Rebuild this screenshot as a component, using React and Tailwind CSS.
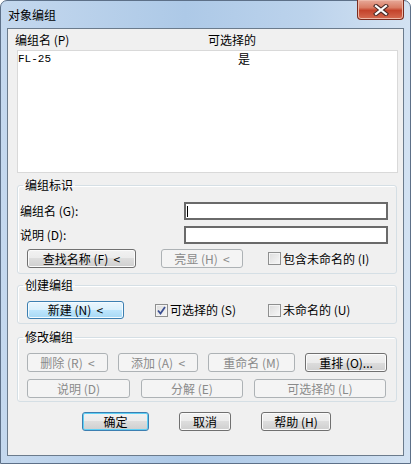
import React from 'react';

const btnStyles = {
	normal: 'border-[#707070] bg-[linear-gradient(#f2f2f2_0%,#ebebeb_50%,#dddddd_50%,#cfcfcf_100%)] text-black shadow-[inset_0_0_0_1px_#fbfbfb]',
	disabled: 'border-[#adb2b5] bg-[#f4f4f4] text-[#8a8a8a]',
	hot: 'border-[#3c7fb1] bg-[linear-gradient(#eaf6fd_0%,#d9f0fc_50%,#bee6fd_50%,#a7d9f5_100%)] text-black shadow-[inset_0_0_0_1px_#f4fbff]',
	focus: 'border-[#3c7fb1] bg-[linear-gradient(#f2f2f2_0%,#ebebeb_50%,#dddddd_50%,#cfcfcf_100%)] text-black shadow-[inset_0_0_0_1px_#5fd0f5]',
};

const Btn = ({ children, variant = 'normal', className = '' }) => (
	<div className={`flex items-center justify-center whitespace-pre rounded-[3px] border text-[12px] leading-none ${btnStyles[variant]} ${className}`}>
		{children}
	</div>
);

const Check = ({ checked, label, className = '' }) => (
	<div className={`flex items-center gap-[2px] ${className}`}>
		<span className="flex h-[13px] w-[13px] items-center justify-center border border-[#8e8f8f] bg-[linear-gradient(135deg,#dcdcdc,#f7f7f7)] shadow-[inset_0_0_0_1px_#f4f4f4]">
			{checked && (
				<svg width="11" height="11" viewBox="0 0 11 11">
					<path d="M2 5.5 L4.5 8.5 L9 2" fill="none" stroke="#3b4f92" strokeWidth="1.8" />
				</svg>
			)}
		</span>
		<span>{label}</span>
	</div>
);

const Group = ({ title, children, className = '' }) => (
	<fieldset className={`mr-[6px] ml-[9px] rounded-[3px] border border-[#d5dfe5] shadow-[inset_1px_1px_0_#ffffff] ${className}`}>
		<legend className="ml-[5px] px-[2px] leading-[16px]">{title}</legend>
		{children}
	</fieldset>
);

export default function App() {
	return (
		<div className="flex h-[464px] w-[411px] flex-col rounded-t-[7px] border border-[#5d7088] bg-[linear-gradient(90deg,#c4d8ee_0%,#adc9e7_45%,#bcd3ec_75%,#d3e2f2_100%)] px-[6px] pb-[7px] font-['Noto_Sans_CJK_SC','Microsoft_YaHei',sans-serif] text-[12px] text-black">
			{/* title bar */}
			<div className="flex h-[27px] items-start justify-between">
				<span className="mt-[6px] ml-[1px] text-[12px] leading-[16px] text-black">对象编组</span>
				<div className="mt-[-1px] flex h-[20px] w-[47px] items-center justify-center rounded-b-[4px] border border-t-0 border-[#7a2c1f] bg-[linear-gradient(#e7a999_0%,#d97c64_40%,#c4432b_55%,#d56b51_100%)] shadow-[inset_0_0_0_1px_#eeb8a8]">
					<svg width="16" height="12" viewBox="0 0 16 12">
						<path d="M3 2 L13 10 M13 2 L3 10" stroke="#4a2a26" strokeWidth="4.2" strokeLinecap="square" />
						<path d="M3 2 L13 10 M13 2 L3 10" stroke="#ffffff" strokeWidth="2.2" strokeLinecap="square" />
					</svg>
				</div>
			</div>

			{/* client area */}
			<div className="flex flex-1 flex-col border border-[#6b7b8c] bg-[#f0f0f0]">
				<div className="flex h-[21px] items-center pl-[7px]">
					<span className="w-[193px]">编组名 (P)</span>
					<span>可选择的</span>
				</div>
				<div className="mr-[5px] ml-[9px] h-[123px] border border-[#d9d9d9] bg-white">
					<div className="flex h-[15px] items-center pt-[1px]">
						<span className="w-[220px] font-['Liberation_Mono',monospace] text-[11px]">FL-25</span>
						<span>是</span>
					</div>
				</div>

				<Group title="编组标识" className="mt-[4px] pb-[5px]">
					<div className="mt-[9px] flex h-[18px] items-center">
						<span className="pl-[2px]">编组名 (G):</span>
						<div className="mr-[8px] ml-auto flex h-[18px] w-[204px] items-center border-2 border-[#6a6a6a] bg-white pl-[1px]">
							<span className="h-[11px] w-[1px] bg-black" />
						</div>
					</div>
					<div className="mt-[6px] flex h-[18px] items-center">
						<span className="pl-[2px]">说明 (D):</span>
						<div className="mr-[8px] ml-auto h-[18px] w-[204px] border-2 border-[#6a6a6a] bg-white" />
					</div>
					<div className="mt-[5px] flex h-[19px] items-center">
						<Btn className="ml-[9px] h-[19px] w-[109px]">查找名称 (F)  &lt;</Btn>
						<Btn variant="disabled" className="ml-[25px] h-[19px] w-[82px]">亮显 (H)  &lt;</Btn>
						<Check className="ml-[25px]" label="包含未命名的 (I)" />
					</div>
				</Group>

				<Group title="创建编组" className="mt-[3px] pb-[4px]">
					<div className="mt-[8px] flex h-[18px] items-center">
						<Btn variant="hot" className="ml-[9px] h-[18px] w-[97px]">新建 (N)  &lt;</Btn>
						<Check checked className="ml-[31px]" label="可选择的 (S)" />
						<Check className="ml-[32px]" label="未命名的 (U)" />
					</div>
				</Group>

				<Group title="修改编组" className="mt-[5px] pb-[3px]">
					<div className="mt-[8px] flex h-[19px] items-center gap-[10px] pl-[9px]">
						<Btn variant="disabled" className="h-[19px] w-[81px]">删除 (R)  &lt;</Btn>
						<Btn variant="disabled" className="h-[19px] w-[80px]">添加 (A)  &lt;</Btn>
						<Btn variant="disabled" className="h-[19px] w-[87px]">重命名 (M)</Btn>
						<Btn className="h-[19px] w-[82px]">重排 (O)...</Btn>
					</div>
					<div className="mt-[7px] flex h-[19px] items-center gap-[11px] pl-[9px]">
						<Btn variant="disabled" className="h-[19px] w-[103px]">说明 (D)</Btn>
						<Btn variant="disabled" className="h-[19px] w-[102px]">分解 (E)</Btn>
						<Btn variant="disabled" className="h-[19px] w-[132px]">可选择的 (L)</Btn>
					</div>
				</Group>

				<div className="mt-[10px] flex items-center pl-[74px]">
					<Btn variant="focus" className="h-[19px] w-[67px]">确定</Btn>
					<Btn className="ml-[30px] h-[19px] w-[52px]">取消</Btn>
					<Btn className="ml-[30px] h-[19px] w-[70px]">帮助 (H)</Btn>
				</div>
			</div>
		</div>
	);
}
